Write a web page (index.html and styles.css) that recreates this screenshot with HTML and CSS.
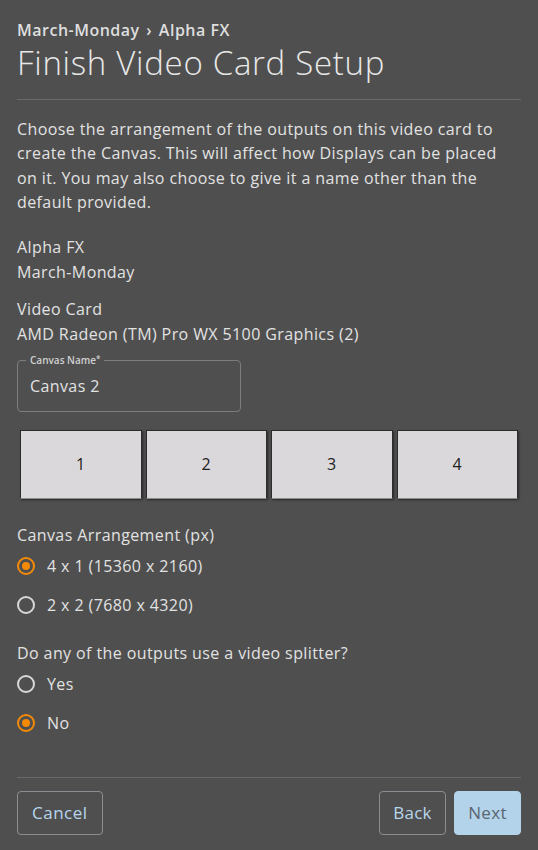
FILE: index.html
```html
<!DOCTYPE html>
<html lang="en">
<head>
  <meta charset="UTF-8">
  <title>Finish Video Card Setup</title>
  <link rel="stylesheet" href="styles.css">
</head>
<body>

  <div class="dialog">
    <!-- header -->
    <div class="crumbs">March-Monday <span class="sep">&rsaquo;</span> Alpha FX</div>
    <h1>Finish Video Card Setup</h1>

    <div class="content">
      <p class="intro">Choose the arrangement of the outputs on this video card to create the Canvas. This will affect how Displays can be placed on it. You may also choose to give it a name other than the default provided.</p>

      <div class="info">
        <div>Alpha FX</div>
        <div>March-Monday</div>
      </div>

      <div class="info">
        <div>Video Card</div>
        <div>AMD Radeon (TM) Pro WX 5100 Graphics (2)</div>
      </div>

      <div class="field">
        <label class="field-label">Canvas Name<sup>*</sup></label>
        <input type="text" value="Canvas 2">
      </div>

      <div class="outputs">
        <div class="output">1</div>
        <div class="output">2</div>
        <div class="output">3</div>
        <div class="output">4</div>
      </div>

      <div class="group">
        <div class="group-title">Canvas Arrangement (px)</div>
        <label class="radio"><input type="radio" name="arr" checked><span class="dot"></span>4 x 1 (15360 x 2160)</label>
        <label class="radio"><input type="radio" name="arr"><span class="dot"></span>2 x 2 (7680 x 4320)</label>
      </div>

      <div class="group">
        <div class="group-title">Do any of the outputs use a video splitter?</div>
        <label class="radio"><input type="radio" name="split"><span class="dot"></span>Yes</label>
        <label class="radio"><input type="radio" name="split" checked><span class="dot"></span>No</label>
      </div>
    </div>

    <!-- footer -->
    <div class="actions">
      <button class="btn">Cancel</button>
      <div class="right">
        <button class="btn">Back</button>
        <button class="btn primary">Next</button>
      </div>
    </div>
  </div>

</body>
</html>
```

FILE: styles.css
```css
body {
  margin: 0;
  background: #4f4f4f;
  color: #e2e2e2;
  font-family: 'Open Sans', sans-serif;
  font-size: 16px;
  letter-spacing: 0.4px;
}
.dialog {
  padding: 18px 17px 14px;
}
.crumbs {
  font-size: 16px;
  font-weight: 600;
  color: #dedede;
  line-height: 24px;
  letter-spacing: 0.5px;
}
.crumbs .sep {
  margin: 0 2px;
}
h1 {
  margin: 0;
  font-size: 33px;
  font-weight: 300;
  line-height: 42px;
  letter-spacing: 0.7px;
  color: #e8e8e8;
  padding-bottom: 15px;
  border-bottom: 1px solid #6a6a6a;
}
.content {
  padding-top: 17px;
  padding-bottom: 34px;
  border-bottom: 1px solid #6a6a6a;
}
.intro {
  margin: 0;
  line-height: 24.4px;
}
.info {
  margin-top: 20px;
  line-height: 25px;
}
.info + .info {
  margin-top: 12px;
}
.field {
  margin-top: 13px;
  width: 224px;
  height: 52px;
  box-sizing: border-box;
  border: 1px solid #7d7d7d;
  border-radius: 4px;
  padding: 0 12px;
  display: flex;
  align-items: center;
  position: relative;
}
.field-label {
  position: absolute;
  left: 8px;
  top: -7px;
  padding: 0 4px;
  background: #4f4f4f;
  font-size: 10px;
  font-weight: 600;
  letter-spacing: 0;
  color: #cfcfcf;
  line-height: 12px;
}
.field-label sup {
  font-size: 8px;
  vertical-align: 2px;
  line-height: 0;
}
.field input {
  background: none;
  border: none;
  color: #e2e2e2;
  font: inherit;
  letter-spacing: inherit;
  padding: 0;
  outline: none;
  width: 100%;
}
.outputs {
  display: flex;
  gap: 4px;
  margin-top: 18px;
  padding: 0 3px;
}
.output {
  flex: 1;
  height: 67px;
  background: #dad8db;
  border: 1px solid #2c2c2c;
  border-bottom-color: #8a8a8a;
  box-shadow: 1px 1px 2px rgba(0,0,0,0.5);
  color: #222;
  display: flex;
  align-items: center;
  justify-content: center;
}
.group {
  margin-top: 24px;
}
.group + .group {
  margin-top: 16px;
}
.group-title {
  line-height: 24px;
}
.radio {
  display: flex;
  align-items: center;
  height: 39px;
  cursor: pointer;
}
.radio input {
  display: none;
}
.dot {
  width: 18px;
  height: 18px;
  box-sizing: border-box;
  border: 2px solid #d8d8d8;
  border-radius: 50%;
  margin-right: 12px;
  position: relative;
}
.radio input:checked + .dot {
  border-color: #f58a07;
}
.radio input:checked + .dot::after {
  content: "";
  position: absolute;
  left: 3px;
  top: 3px;
  width: 8px;
  height: 8px;
  border-radius: 50%;
  background: #f58a07;
}
.actions {
  display: flex;
  justify-content: space-between;
  padding-top: 13px;
}
.right {
  display: flex;
  gap: 8px;
}
.btn {
  height: 44px;
  min-width: 67px;
  padding: 0 14px;
  background: none;
  border: 1px solid #8a8e92;
  border-radius: 4px;
  color: #b8d6ec;
  font: inherit;
  font-size: 17px;
  letter-spacing: 0.5px;
  cursor: pointer;
}
.right .btn {
  padding: 0 12px;
  letter-spacing: 0.3px;
}
.btn.primary {
  background: #b3d3ea;
  border-color: #b3d3ea;
  color: #5a6670;
}
```
